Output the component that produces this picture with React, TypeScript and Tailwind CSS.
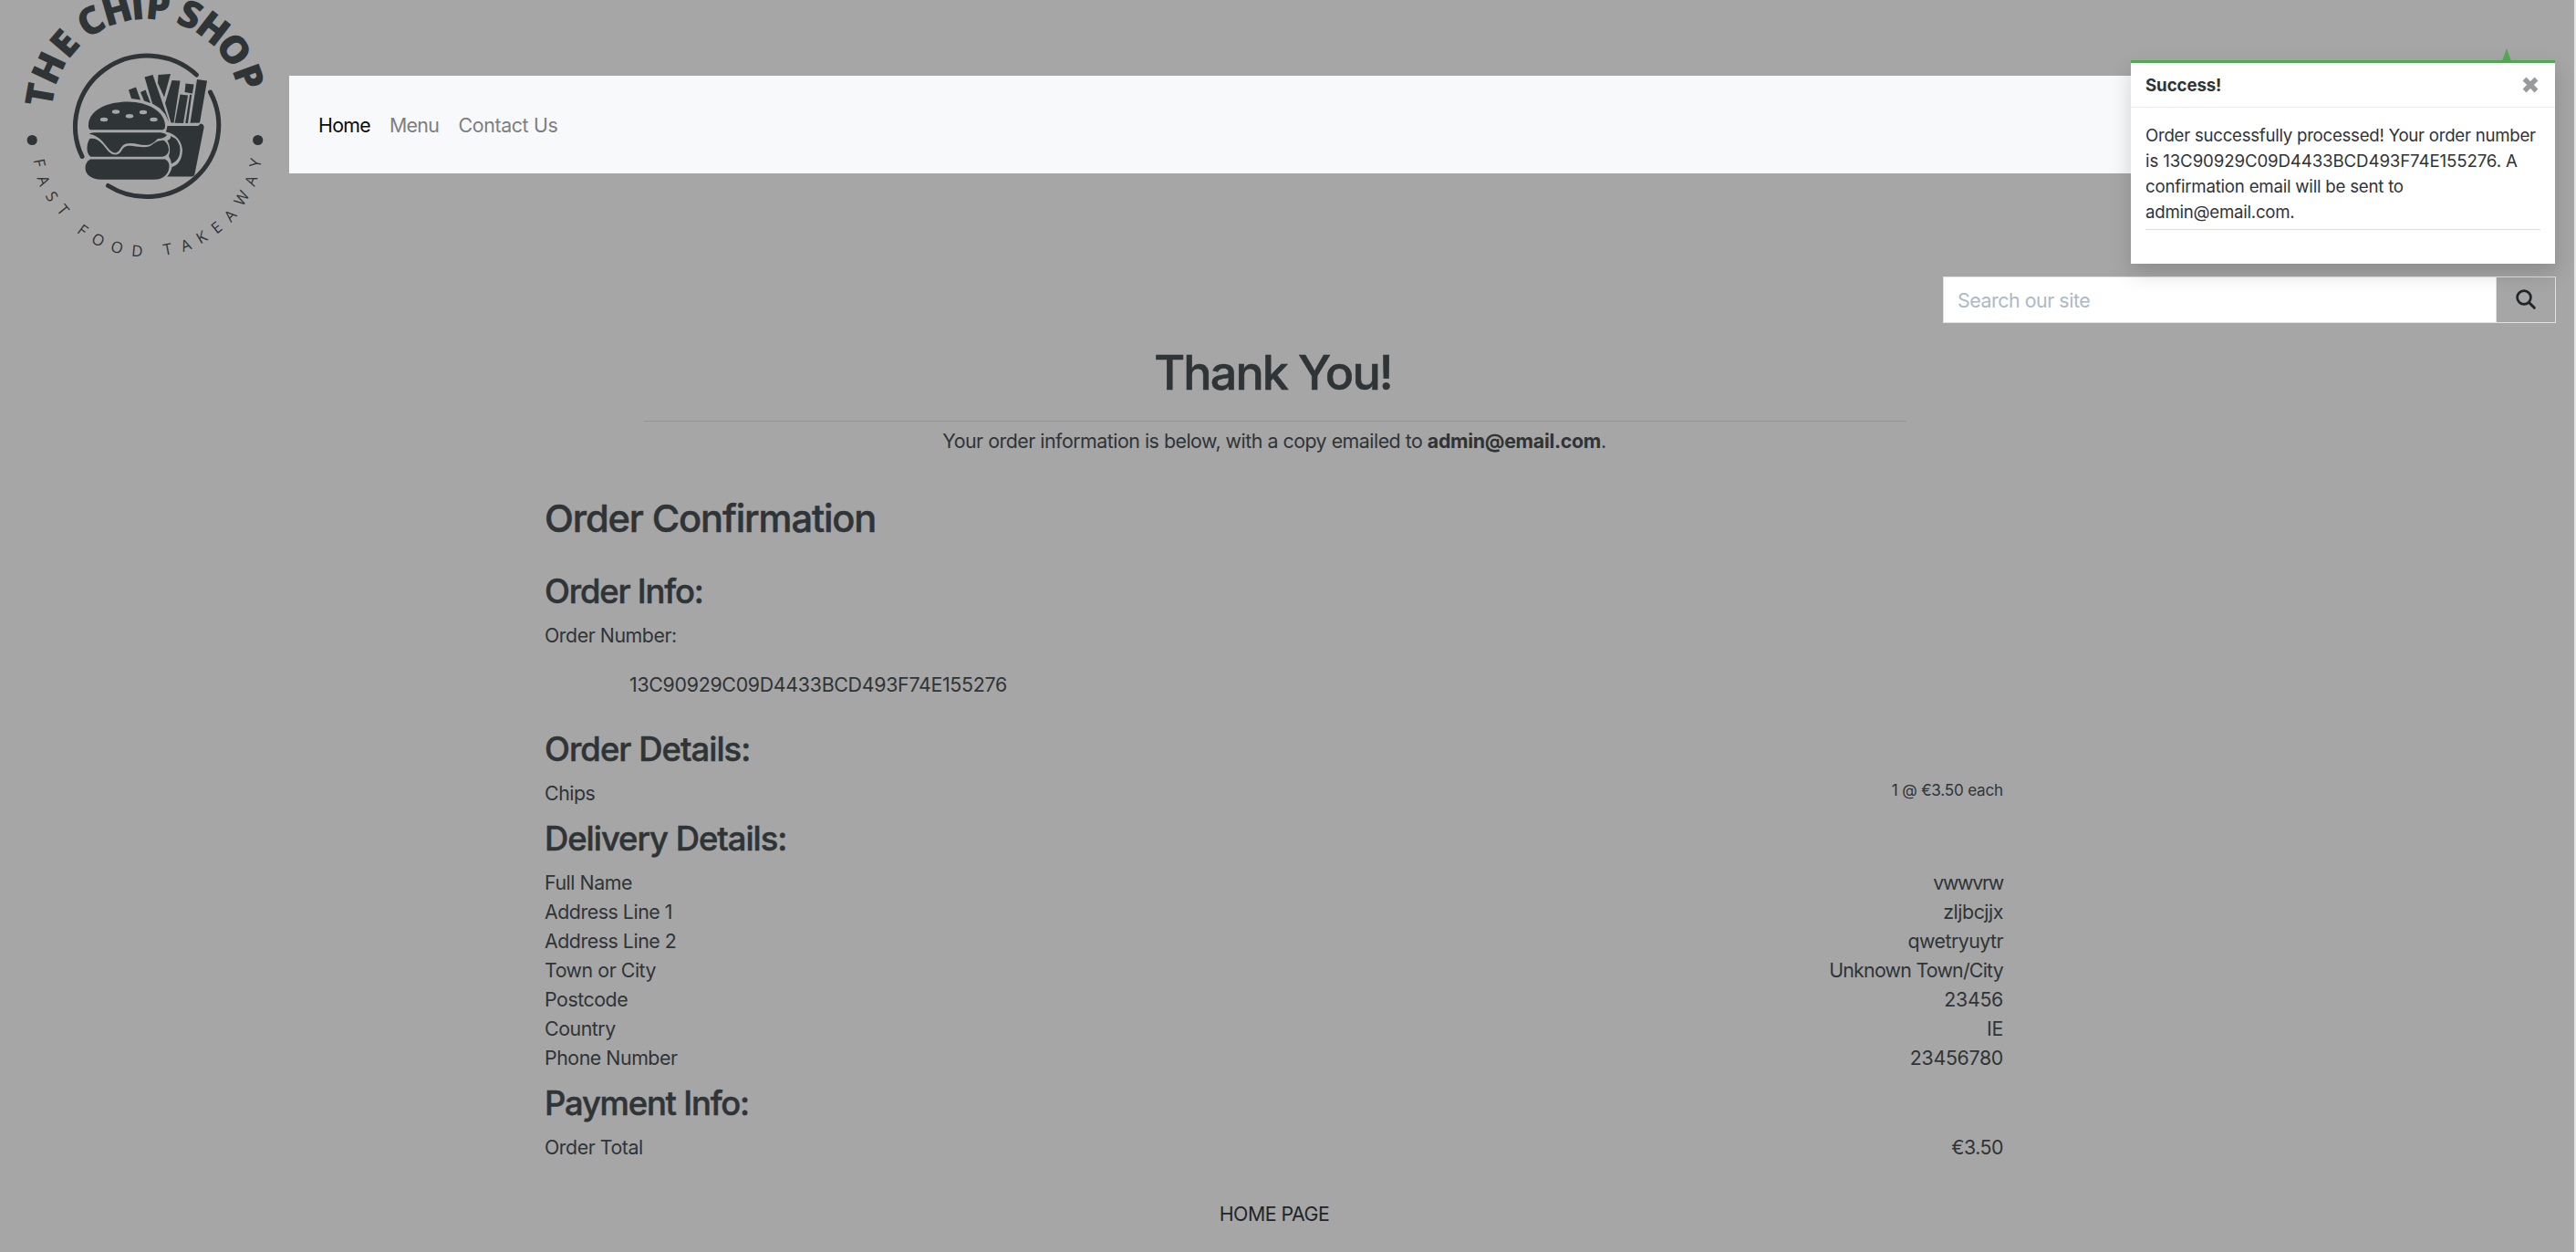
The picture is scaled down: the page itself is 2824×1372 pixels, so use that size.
import React from "react";

type ArcLetter = { ch: string; x: number; y: number; r: number };

// Upper arc: every letter is turned about the arc's centre by its own angle.
const TITLE: { ch: string; a: number }[] = [
  { ch: "T", a: -79.8 },
  { ch: "H", a: -64.8 },
  { ch: "E", a: -49.4 },
  { ch: "C", a: -31.2 },
  { ch: "H", a: -16 },
  { ch: "I", a: -5 },
  { ch: "P", a: 6 },
  { ch: "S", a: 23.6 },
  { ch: "H", a: 37.8 },
  { ch: "O", a: 53.6 },
  { ch: "P", a: 70 },
];

const TAGLINE: ArcLetter[] = [
  { ch: "F", x: 43.3, y: 178.3, r: 79 },
  { ch: "A", x: 47.7, y: 198, r: 70 },
  { ch: "S", x: 56.7, y: 215.3, r: 60 },
  { ch: "T", x: 69, y: 230, r: 51 },
  { ch: "F", x: 90.7, y: 252.3, r: 36 },
  { ch: "O", x: 107.7, y: 263, r: 27 },
  { ch: "O", x: 128.3, y: 271, r: 16 },
  { ch: "D", x: 150.3, y: 275, r: 5 },
  { ch: "T", x: 183.7, y: 273.3, r: -11 },
  { ch: "A", x: 203.7, y: 268.7, r: -20 },
  { ch: "K", x: 221, y: 260, r: -30 },
  { ch: "E", x: 237.3, y: 249.3, r: -39 },
  { ch: "A", x: 252.3, y: 236.3, r: -48 },
  { ch: "W", x: 265, y: 217.3, r: -59 },
  { ch: "A", x: 275.3, y: 198, r: -70 },
  { ch: "Y", x: 280, y: 178.7, r: -79 },
];

const INK = "#2f3437";
const PAPER = "#a6a6a6";

function Logo() {
  return (
    <svg width="317" height="300" viewBox="0 0 317 300" className="shrink-0" fill={INK}>
      <g fontFamily="Open Sans" fontWeight="800" fontSize="42" textAnchor="middle">
        {TITLE.map((l, i) => (
          <text key={i} transform={`translate(161 125) rotate(${l.a})`} x="0" y="-104">
            {l.ch}
          </text>
        ))}
      </g>
      <g fontFamily="Open Sans" fontSize="17" textAnchor="middle">
        {TAGLINE.map((l, i) => (
          <text key={i} transform={`translate(${l.x} ${l.y}) rotate(${l.r})`} x="0" y="6">
            {l.ch}
          </text>
        ))}
      </g>
      <circle cx="35.2" cy="153.5" r="5.6" />
      <circle cx="282.7" cy="153.5" r="5.6" />
      {/* broken ring */}
      <g fill="none" stroke={INK} strokeWidth="5" strokeLinecap="round">
        <path d="M90 171.500 A79 77.500 0 0 1 215.500 82" />
        <path d="M230.500 101 A79 78 0 0 1 118.500 203.500" />
      </g>
      {/* fries */}
      <path d="M141 98.500 L149 95.500 L154 109.500 L144 108 Z" />
      <path d="M154 101 L159.500 98.500 L165 113 L158 110.500 Z" />
      <path d="M158.500 84.500 L167.500 82 L185.500 134 L181 125 L175 118.500 L167 113.500 Z" />
      <path d="M173.500 82 L187 81 L180 106.500 L173 91 Z" />
      <path d="M188.500 88 L197.500 88.500 L190.500 134.500 L187.500 134.500 L181 113 Z" />
      <path d="M197.500 103.500 L206 104.500 L201 135 L191.500 134.800 Z" />
      <path d="M203.500 91.500 L212.500 92.500 L211 102.500 L202.500 101 Z" />
      <path d="M208.200 103.500 L210.200 104 L206 135 L203.200 135 Z" />
      <path d="M216 87 L227 88.500 L219 134.500 L208.500 134.800 Z" />
      <path d="M183.500 138 L217 138 L220 135.500 Q224 136 223.500 140 L213.500 190.500 Q213 193.500 210 193.500 L183 193.500 Q187 190 188.500 183 Q199 180 200 165 Q199 151 186 145.500 L182 144.500 Z" />
      <path d="M187 149 Q197.500 153 197.500 165 Q197 176 188 179.500 Q187 174 185 171 Q188 162 183.500 154 Q188 152 187 149 Z" />
      {/* burger */}
      <path d="M99 142.300 Q96.500 141.500 97 136 C98.500 120 118 111.500 140 111.500 C163 111.500 182 123 181 139 Q181 141.500 178.500 142.300 Z" />
      <path d="M98 147 Q99 145.200 103 145.200 L176 145.200 Q181 146 183 148 Q180 152 173 152 Q167 158.500 161 159 C154 159.500 150 157 143 157 C135 157 134 160 131 164.500 C127 169.500 123.500 168 119 163 C113 156 109 148.500 98 147 Z" />
      <path d="M98.500 152 C108 150.500 113 159 119 166 C124 171 130 170.500 133 165.500 C136 160 139 159 146 160 C154 161 163 163 168 157.500 Q174 153 180 154 Q185 158 185 165 Q184 170.500 178 171.800 L99.500 171.800 Q95.500 169 95.500 163 Q95.500 156 98.500 152 Z" />
      <path d="M99 174.500 L181 174.500 Q186 177 185.500 183 C184.500 192 178 196.800 169 196.800 L111 196.800 C100 196.800 93.500 191 93.500 184 Q93.500 177.500 99 174.500 Z" />
      <g fill={PAPER}>
        <ellipse cx="127" cy="122.500" rx="4.200" ry="2.200" />
        <ellipse cx="157" cy="123" rx="4.200" ry="2.200" />
        <ellipse cx="142" cy="127.200" rx="4.200" ry="2.200" />
        <ellipse cx="114" cy="131" rx="4.200" ry="2.200" />
        <ellipse cx="168.500" cy="131" rx="4.200" ry="2.200" />
      </g>
    </svg>
  );
}

function Toast() {
  return (
    <div className="absolute top-[66px] left-[2336px] h-[223px] w-[465px] border-t-[3px] border-[#53a653] bg-white shadow-[0_10px_22px_rgba(0,0,0,0.16)]">
      <svg width="10" height="14" viewBox="0 0 10 14" className="absolute -top-[16px] left-[407px]">
        <path d="M5 0 L10 14 H0 Z" fill="#53a653" />
      </svg>
      <div className="flex h-[49px] items-center justify-between border-b border-[#ececec] pr-[18px] pl-4">
        <strong className="pt-[2px] text-[18.67px] leading-7 font-bold tracking-[-0.1px]">Success!</strong>
        <svg width="18" height="18" viewBox="0 0 18 18">
          <path d="M2.500 2.500 L15.500 15.500 M15.500 2.500 L2.500 15.500" stroke="#999a9c" strokeWidth="5.400" />
        </svg>
      </div>
      <div className="px-4 pt-[17px] text-[18.67px] leading-7">
        <div className="tracking-[-0.27px]">Order successfully processed! Your order number</div>
        <div className="tracking-[-0.12px]">is 13C90929C09D4433BCD493F74E155276. A</div>
        <div className="tracking-[-0.22px]">confirmation email will be sent to</div>
        <div className="tracking-[-0.25px]">admin@email.com.</div>
        <hr className="mt-[4px] border-t border-[#dfdfdf]" />
      </div>
    </div>
  );
}

type Row = [label: string, value: string, valueClass: string];

const DELIVERY: Row[] = [
  ["Full Name", "vwwvrw", "tracking-[-1.3px]"],
  ["Address Line 1", "zljbcjjx", "tracking-[-0.45px]"],
  ["Address Line 2", "qwetryuytr", "tracking-[-0.53px]"],
  ["Town or City", "Unknown Town/City", "tracking-[-0.75px]"],
  ["Postcode", "23456", "tracking-[-0.3px]"],
  ["Country", "IE", "tracking-[-0.3px]"],
  ["Phone Number", "23456780", "tracking-[-0.3px]"],
];

export default function App() {
  return (
    <div className="relative h-[1372px] w-full overflow-hidden border-r-2 border-[#e6e6e6] bg-[#a6a6a6] font-[Inter,sans-serif] text-[21.33px] leading-8 text-[#2f3437]">
      <header className="flex h-[303px]">
        <Logo />
        <nav className="mt-[83px] mr-[21px] flex h-[107px] flex-1 items-center bg-[#f8f9fb] pl-[32px] text-[#7d7e80]">
          <a className="w-[78px] tracking-[-0.7px] text-[#0b0b0c]">Home</a>
          <a className="w-[75.5px] tracking-[-0.7px]">Menu</a>
          <a className="tracking-[-0.35px]">Contact Us</a>
        </nav>
      </header>
      <div className="mr-[20px] flex h-[51px] justify-end">
        <div className="flex w-[607px] items-center border border-[#dee2e6] bg-white pl-[15px] tracking-[-0.44px] text-[#adb9c6]">
          Search our site
        </div>
        <div className="flex w-[65px] items-center justify-center border border-l-0 border-[#dee2e6]">
          <svg width="24" height="24" viewBox="0 0 24 24" fill="none" stroke="#212529" className="-mt-px">
            <circle cx="10" cy="10" r="7.400" strokeWidth="2.700" />
            <path d="M15.500 15.500 L21.300 21.300" strokeWidth="3" strokeLinecap="round" />
          </svg>
        </div>
      </div>
      <main className="flex flex-col">
        <h1 className="mt-[23px] ml-[597px] w-[1597px] text-center text-[52px] leading-[64px] font-medium tracking-[-1.85px] [-webkit-text-stroke:0.6px]">
          Thank You!
        </h1>
        <hr className="mt-[20px] ml-[706px] w-[1384px] border-t border-[#939494]" />
        <p className="mt-[5px] ml-[597px] w-[1600px] text-center tracking-[-0.48px]">
          Your order information is below, with a copy emailed to{" "}
          <strong className="font-bold tracking-[-0.28px]">admin@email.com</strong>.
        </p>
        <section className="ml-[597px] w-[1599px] tracking-[-0.45px]">
          <h2 className="mt-[44px] text-[41.6px] leading-[51px] font-medium tracking-[-1.13px] [-webkit-text-stroke:0.5px]">
            Order Confirmation
          </h2>
          <h3 className="mt-[32px] text-[36.4px] leading-[45px] font-medium tracking-[-1.18px] [-webkit-text-stroke:0.5px]">
            Order Info:
          </h3>
          <div className="mt-[9px]">Order Number:</div>
          <div className="mt-[22px] pl-[93px] tracking-[-0.28px]">13C90929C09D4433BCD493F74E155276</div>
          <h3 className="mt-[33px] text-[36.4px] leading-[45px] font-medium tracking-[-0.96px] [-webkit-text-stroke:0.5px]">
            Order Details:
          </h3>
          <div className="mt-[9px] flex h-8 justify-between">
            <span>Chips</span>
            <span className="text-[17.07px] leading-[25.6px] tracking-[-0.18px]">1 @ €3.50 each</span>
          </div>
          <h3 className="mt-[12px] text-[36.4px] leading-[45px] font-medium tracking-[-1.02px] [-webkit-text-stroke:0.5px]">
            Delivery Details:
          </h3>
          <div className="mt-[9px]">
            {DELIVERY.map(([label, value, cls]) => (
              <div key={label} className="flex justify-between">
                <span>{label}</span>
                <span className={cls}>{value}</span>
              </div>
            ))}
          </div>
          <h3 className="mt-[12px] text-[36.4px] leading-[45px] font-medium tracking-[-1.2px] [-webkit-text-stroke:0.5px]">
            Payment Info:
          </h3>
          <div className="mt-[9px] flex justify-between">
            <span>Order Total</span>
            <span className="tracking-[-0.5px]">€3.50</span>
          </div>
        </section>
        <a className="mt-[41px] ml-[597px] w-[1600px] text-center tracking-[-0.5px] text-[#212529]">HOME PAGE</a>
      </main>
      <Toast />
    </div>
  );
}
